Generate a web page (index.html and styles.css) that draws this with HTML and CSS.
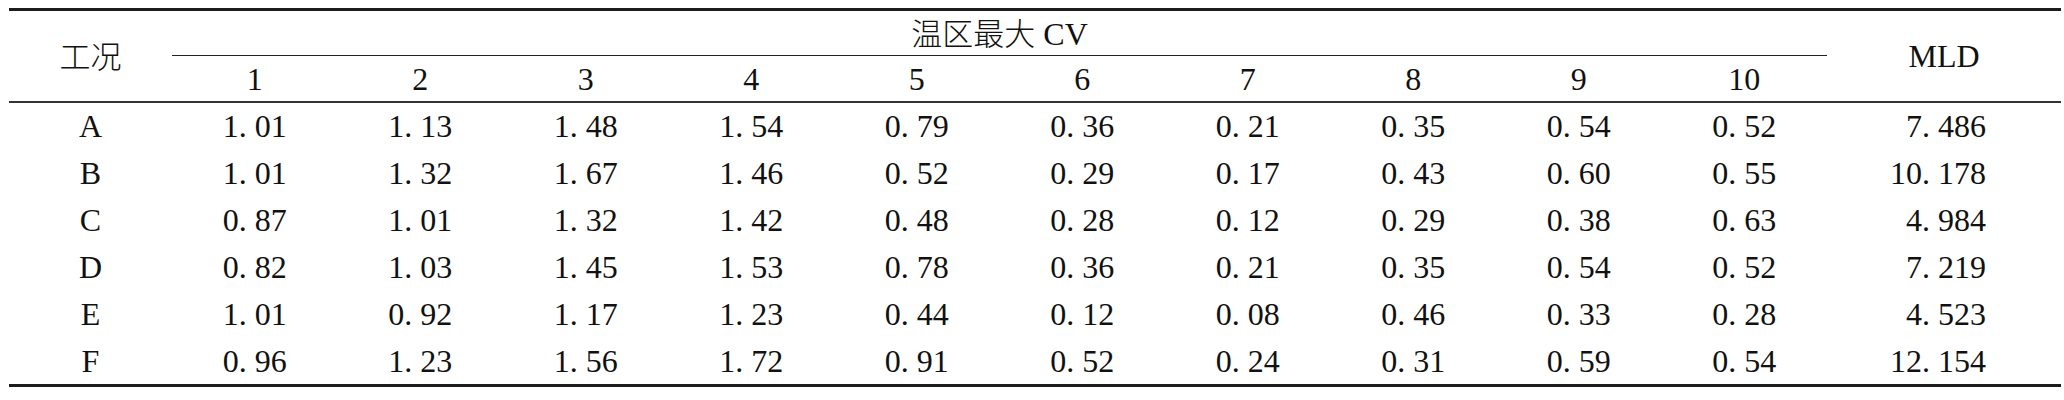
FILE: index.html
```html
<!DOCTYPE html>
<html>
<head>
<meta charset="utf-8">
<title>table</title>
<link rel="stylesheet" href="styles.css">
</head>
<body>
<table class="cv-table">
  <colgroup>
    <col class="c-case">
    <col class="c-num"><col class="c-num"><col class="c-num"><col class="c-num"><col class="c-num">
    <col class="c-num"><col class="c-num"><col class="c-num"><col class="c-num"><col class="c-num">
    <col class="c-mld">
  </colgroup>
  <thead>
    <tr class="h1">
      <th rowspan="2" class="span-cell"><span class="zh" lang="zh-CN">工况</span></th>
      <th colspan="10" class="group"><span class="zh" lang="zh-CN">温区最大</span> CV</th>
      <th rowspan="2" class="span-cell">MLD</th>
    </tr>
    <tr class="h2">
      <th>1</th><th>2</th><th>3</th><th>4</th><th>5</th><th>6</th><th>7</th><th>8</th><th>9</th><th>10</th>
    </tr>
  </thead>
  <tbody>
    <tr><td>A</td><td>1<span class="dp">.</span>01</td><td>1<span class="dp">.</span>13</td><td>1<span class="dp">.</span>48</td><td>1<span class="dp">.</span>54</td><td>0<span class="dp">.</span>79</td><td>0<span class="dp">.</span>36</td><td>0<span class="dp">.</span>21</td><td>0<span class="dp">.</span>35</td><td>0<span class="dp">.</span>54</td><td>0<span class="dp">.</span>52</td><td class="mld">7<span class="dp">.</span>486</td></tr>
    <tr><td>B</td><td>1<span class="dp">.</span>01</td><td>1<span class="dp">.</span>32</td><td>1<span class="dp">.</span>67</td><td>1<span class="dp">.</span>46</td><td>0<span class="dp">.</span>52</td><td>0<span class="dp">.</span>29</td><td>0<span class="dp">.</span>17</td><td>0<span class="dp">.</span>43</td><td>0<span class="dp">.</span>60</td><td>0<span class="dp">.</span>55</td><td class="mld">10<span class="dp">.</span>178</td></tr>
    <tr><td>C</td><td>0<span class="dp">.</span>87</td><td>1<span class="dp">.</span>01</td><td>1<span class="dp">.</span>32</td><td>1<span class="dp">.</span>42</td><td>0<span class="dp">.</span>48</td><td>0<span class="dp">.</span>28</td><td>0<span class="dp">.</span>12</td><td>0<span class="dp">.</span>29</td><td>0<span class="dp">.</span>38</td><td>0<span class="dp">.</span>63</td><td class="mld">4<span class="dp">.</span>984</td></tr>
    <tr><td>D</td><td>0<span class="dp">.</span>82</td><td>1<span class="dp">.</span>03</td><td>1<span class="dp">.</span>45</td><td>1<span class="dp">.</span>53</td><td>0<span class="dp">.</span>78</td><td>0<span class="dp">.</span>36</td><td>0<span class="dp">.</span>21</td><td>0<span class="dp">.</span>35</td><td>0<span class="dp">.</span>54</td><td>0<span class="dp">.</span>52</td><td class="mld">7<span class="dp">.</span>219</td></tr>
    <tr><td>E</td><td>1<span class="dp">.</span>01</td><td>0<span class="dp">.</span>92</td><td>1<span class="dp">.</span>17</td><td>1<span class="dp">.</span>23</td><td>0<span class="dp">.</span>44</td><td>0<span class="dp">.</span>12</td><td>0<span class="dp">.</span>08</td><td>0<span class="dp">.</span>46</td><td>0<span class="dp">.</span>33</td><td>0<span class="dp">.</span>28</td><td class="mld">4<span class="dp">.</span>523</td></tr>
    <tr><td>F</td><td>0<span class="dp">.</span>96</td><td>1<span class="dp">.</span>23</td><td>1<span class="dp">.</span>56</td><td>1<span class="dp">.</span>72</td><td>0<span class="dp">.</span>91</td><td>0<span class="dp">.</span>52</td><td>0<span class="dp">.</span>24</td><td>0<span class="dp">.</span>31</td><td>0<span class="dp">.</span>59</td><td>0<span class="dp">.</span>54</td><td class="mld">12<span class="dp">.</span>154</td></tr>
  </tbody>
</table>
</body>
</html>
```
FILE: styles.css
```css
body {
  margin: 8px 0 0 9px;
  background: #ffffff;
  color: #111111;
  font-family: "Liberation Serif", "Times New Roman", serif;
  font-size: 32px;
}

.cv-table {
  width: 2052px;
  table-layout: fixed;
  border-collapse: separate;
  border-spacing: 0;
  border-top: 3px solid #1c1c1c;
  border-bottom: 3px solid #1c1c1c;
}

.c-case { width: 163px; }
.c-num { width: 165.5px; }
.c-mld { width: 234px; }

.cv-table th,
.cv-table td {
  padding: 0;
  font-family: "Liberation Serif", "Times New Roman", serif;
  font-size: 32px;
  font-weight: 400;
  text-align: center;
  vertical-align: middle;
  line-height: 1;
  white-space: nowrap;
}

.cv-table .zh {
  font-family: "Noto Sans CJK SC", sans-serif;
  font-weight: 300;
  font-size: 31px;
}

.h1 th {
  height: 44px;
}

.h1 .group {
  border-bottom: 1.5px solid #222222;
}

.h2 th {
  height: 45px;
  border-bottom: 2px solid #333333;
}

.span-cell {
  border-bottom: 2px solid #333333;
}

.cv-table tbody td {
  height: 46.9px;
}

.cv-table td.mld {
  text-align: right;
  padding-right: 75px;
}

.dp {
  margin-right: 0.25em;
}
```
